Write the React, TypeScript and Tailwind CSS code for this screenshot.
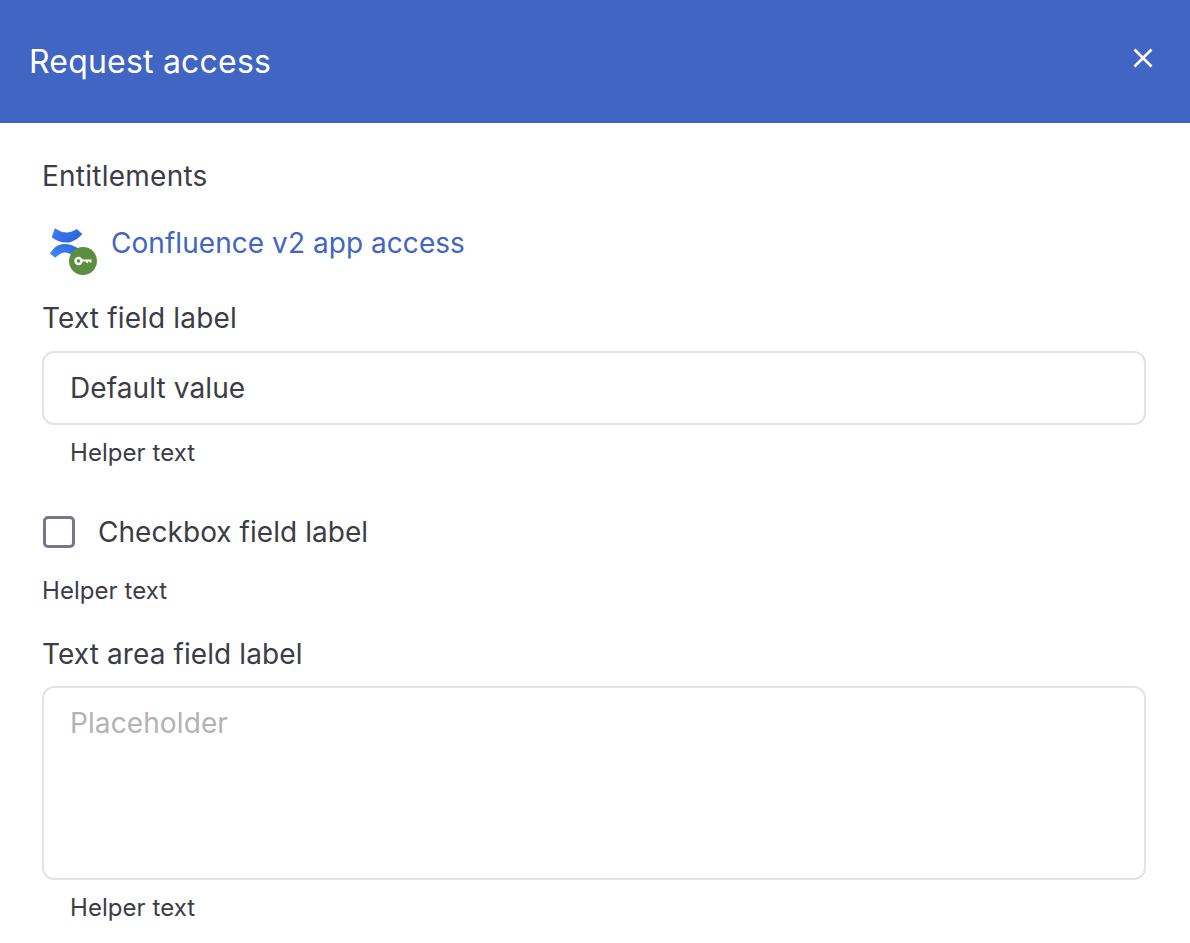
export default function App() {
  const font = { fontFamily: "Inter, sans-serif" };
  return (
    <div className="w-[1190px] h-[943px] overflow-hidden bg-white text-[#3c3c46]" style={font}>
      <header className="h-[123px] bg-[#4065c2] flex items-center justify-between pl-[29px] pr-[36px]">
        <h1 className="text-[32px] leading-[36px] text-white font-normal tracking-[0.2px]">Request access</h1>
        <svg width="22" height="22" viewBox="0 0 22 22" className="mb-[8px]" fill="none" stroke="white" strokeWidth="2.6">
          <path d="M2.5 2.5 L19.5 19.5 M19.5 2.5 L2.5 19.5" />
        </svg>
      </header>
      <main className="px-[42px] flex flex-col">
        <div className="mt-[37px] text-[28px] leading-[32px] tracking-[0.25px]">Entitlements</div>
        <div className="mt-[24px] h-[54px] flex items-center gap-[14px]">
          <svg width="55" height="54" viewBox="0 0 55 54" className="overflow-visible">
            <defs>
              <linearGradient id="confA" x1="0" y1="0" x2="1" y2="0.4">
                <stop offset="0" stopColor="#3f7df0" />
                <stop offset="1" stopColor="#2a66de" />
              </linearGradient>
              <linearGradient id="confB" x1="0" y1="1" x2="1" y2="0">
                <stop offset="0" stopColor="#4a88f5" />
                <stop offset="1" stopColor="#2a66de" />
              </linearGradient>
            </defs>
            <path d="M13 12.3 C17 15 21 16.6 24.7 16.6 C28 16.6 31.5 15 34.7 13 L40.3 18 C35 23.5 30 26.6 24.7 26.6 C19 26.6 14 24.6 9.7 21.3 Z" fill="url(#confA)" />
            <path d="M8 37.3 C12 31.5 16 28 22 28 C28 28 33 30 38 33.5 L32 40.5 C29 38 26 36.6 23 36.6 C19.5 36.6 16.5 39 13 41.7 Z" fill="url(#confB)" />
            <circle cx="41" cy="45" r="14" fill="#5b8f3f" />
            <circle cx="36.5" cy="45" r="3" fill="none" stroke="white" strokeWidth="2.4" />
            <path d="M39 43.6 H49.5 V46.5 H47.6 V45.6 H46 V47 H44.2 V45.6 H39 Z" fill="white" />
          </svg>
          <span className="text-[28px] leading-[32px] text-[#4065c2] tracking-[0.05px]">Confluence v2 app access</span>
        </div>
        <label className="mt-[32px] text-[28px] leading-[32px] tracking-[0.15px]">Text field label</label>
        <div className="mt-[17px] h-[74px] w-[1104px] rounded-[12px] border-2 border-[#e3e3e3] flex items-center px-[26px] text-[28px] tracking-[0.1px]">Default value</div>
        <div className="mt-[14px] ml-[28px] text-[24px] leading-[28px] tracking-[0.05px]">Helper text</div>
        <div className="mt-[49px] flex items-center gap-[23px] h-[32px]">
          <div className="ml-[1px] w-[32px] h-[32px] rounded-[5px] border-[3.5px] border-[#77778a]" />
          <span className="text-[28px] leading-[32px] tracking-[0.05px]">Checkbox field label</span>
        </div>
        <div className="mt-[29px] text-[24px] leading-[28px] tracking-[0.05px]">Helper text</div>
        <label className="mt-[33px] text-[28px] leading-[32px] tracking-[0.1px]">Text area field label</label>
        <div className="mt-[16px] h-[194px] w-[1104px] rounded-[12px] border-2 border-[#e3e3e3] px-[26px] pt-[19px] text-[28px] leading-[32px] text-[#b3b3b3] tracking-[0.1px]">Placeholder</div>
        <div className="mt-[14px] ml-[28px] text-[24px] leading-[28px] tracking-[0.05px]">Helper text</div>
      </main>
    </div>
  );
}
